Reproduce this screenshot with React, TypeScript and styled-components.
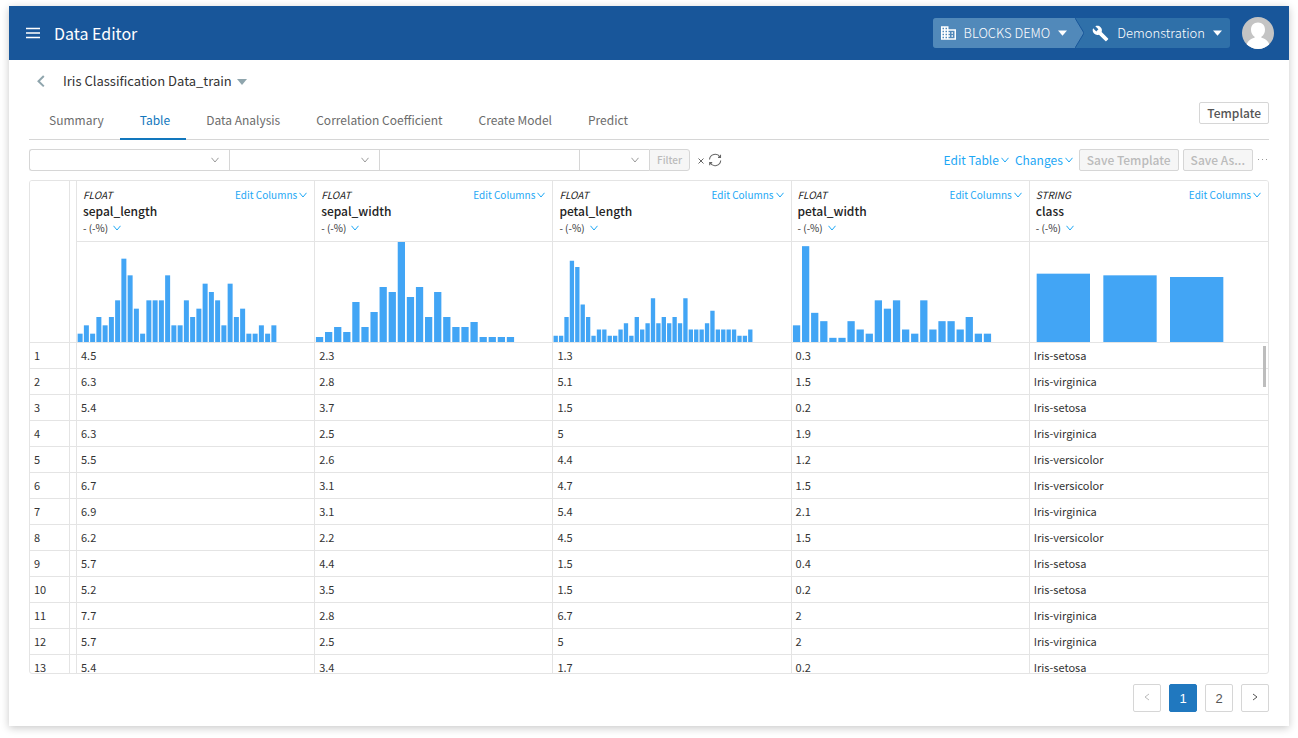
import React from "react";
import styled, { createGlobalStyle } from "styled-components";

const FONT = `"Noto Sans CJK JP", "Noto Sans", sans-serif`;
const LINK = "#1da7f5";
const LINE = "#e4e4e4";
const BORDER = "#d6d6d6";

const GlobalStyle = createGlobalStyle`
  * { box-sizing: border-box; }
  body { margin: 0; background: #fff; color: #333; font-family: ${FONT}; font-size: 13px; line-height: 20px; }
  button, input, select { font-family: inherit; margin: 0; }
  button { cursor: pointer; }
`;

const Window = styled.div`
  height: calc(100vh - 18px);
  margin: 6px 9px 12px;
  display: flex;
  flex-direction: column;
  background: #fff;
  box-shadow: 0 2px 8px rgba(0, 0, 0, 0.22);
`;

const TopBar = styled.header`
  flex: none;
  height: 54px;
  padding: 0 15px 0 17px;
  display: flex;
  align-items: center;
  background: #18569a;
  color: #fff;
`;

const IconButton = styled.button`
  display: flex;
  padding: 0;
  border: 0;
  background: none;
  color: inherit;
`;

const AppTitle = styled.h1`
  margin: 0 auto 0 14px;
  font-size: 16px;
  line-height: 24px;
  font-weight: 400;
`;

const Crumbs = styled.nav`
  position: relative;
  display: flex;
  height: 30px;
  margin-right: 12px;
  border-radius: 3px;
  overflow: hidden;
  background: #2f70a9;
`;

const Crumb = styled.button<{ $first?: boolean }>`
  display: flex;
  align-items: center;
  gap: 8px;
  padding: 0 8px;
  border: 0;
  background: ${(p) => (p.$first ? "#5189ba" : "none")};
  color: #fff;
  font-size: 13px;
  line-height: 20px;
  font-weight: 300;
`;

const CrumbArrow = styled.svg`
  flex: none;
  display: block;
`;

const Content = styled.main`
  flex: 1;
  min-height: 0;
  display: flex;
  flex-direction: column;
  padding: 0 20px 14px;
`;

const TitleRow = styled.div`
  display: flex;
  align-items: center;
  height: 42px;
  padding-left: 7px;
  color: #8fa5ad;
`;

const DataTitle = styled.h2`
  margin: 0 5px 0 17px;
  font-size: 13px;
  line-height: 20px;
  font-weight: 400;
  color: #333;
`;

const TabRow = styled.div`
  display: flex;
  align-items: flex-start;
  justify-content: space-between;
  height: 38px;
  border-bottom: 1px solid ${BORDER};
`;

const Tabs = styled.nav`
  display: flex;
`;

const Tab = styled.a<{ $active?: boolean }>`
  height: 38px;
  padding: 8px 16px 0 20px;
  font-size: 12px;
  line-height: 20px;
  text-decoration: none;
  color: ${(p) => (p.$active ? "#1277bd" : "#6c6c6c")};
  border-bottom: 2px solid ${(p) => (p.$active ? "#1277bd" : "transparent")};
`;

const SmallButton = styled.button`
  height: 22px;
  padding: 0 7px;
  border: 1px solid ${BORDER};
  border-radius: 2px;
  background: #fff;
  color: #555;
  font-size: 12px;
  line-height: 20px;
  font-weight: 500;
  &:disabled {
    background: #f6f6f6;
    color: #bbb;
  }
`;

const ToolRow = styled.div`
  display: flex;
  align-items: center;
  justify-content: space-between;
  height: 22px;
  margin: 9px 0;
`;

const Filters = styled.form`
  display: flex;
  align-items: center;
  color: #666;
`;

const SelectBox = styled.label<{ $width: number }>`
  position: relative;
  width: ${(p) => p.$width}px;
  height: 22px;
  svg {
    position: absolute;
    right: 10px;
    top: 7px;
    color: #999;
    pointer-events: none;
  }
`;

const Select = styled.select<{ $first?: boolean }>`
  appearance: none;
  width: 100%;
  height: 22px;
  border: 1px solid ${BORDER};
  border-right: 0;
  border-radius: ${(p) => (p.$first ? "3px 0 0 3px" : 0)};
  background: #fff;
`;

const ValueInput = styled.input`
  width: 200px;
  height: 22px;
  border: 1px solid ${BORDER};
  border-right: 0;
`;

const FilterButton = styled(SmallButton)`
  margin-right: 8px;
  border-radius: 0 3px 3px 0;
  font-size: 10px;
`;

const Actions = styled.div`
  display: flex;
  align-items: center;
  gap: 4px;
`;

const LinkButton = styled.button<{ $small?: boolean }>`
  display: flex;
  align-items: center;
  gap: 2px;
  padding: 0;
  border: 0;
  background: none;
  color: ${LINK};
  font-size: ${(p) => (p.$small ? 10 : 12)}px;
  line-height: 16px;
`;

const ActionLinks = styled.div`
  display: flex;
  gap: 6px;
  margin-right: 2px;
`;

const TableFrame = styled.div`
  position: relative;
  flex: 1;
  min-height: 0;
  display: flex;
  border: 1px solid ${LINE};
  border-radius: 3px;
  overflow: hidden;
`;

const TableScroll = styled.div`
  flex: 1;
  overflow-y: auto;
  scrollbar-width: none;
`;

const ScrollThumb = styled.div`
  position: absolute;
  top: 165px;
  right: 2px;
  width: 3px;
  height: 41px;
  background: #bdbdbd;
`;

const Table = styled.table`
  width: 100%;
  table-layout: fixed;
  border-collapse: separate;
  border-spacing: 0;
  thead {
    position: sticky;
    top: 0;
    background: #fff;
  }
  th, td {
    padding: 0;
    text-align: left;
    font-weight: 400;
    border-right: 1px solid ${LINE};
    border-bottom: 1px solid ${LINE};
  }
  tr > :last-child:not([rowspan]) {
    border-right: 0;
  }
`;

const NumberCol = styled.col`
  width: 40px;
`;

const GapCol = styled.col`
  width: 7px;
`;

const HeadInfo = styled.div`
  height: 60px;
  padding: 6px 7px 0 6px;
  line-height: 16px;
`;

const HeadTop = styled.div`
  display: flex;
  justify-content: space-between;
`;

const TypeName = styled.em`
  font-size: 10px;
  color: #222;
`;

const ColumnName = styled.strong`
  display: block;
  font-size: 12px;
  font-weight: 500;
  color: #222;
`;

const Missing = styled.button`
  display: flex;
  align-items: center;
  gap: 5px;
  padding: 0;
  border: 0;
  background: none;
  font-size: 10px;
  line-height: 18px;
  color: #333;
  svg {
    color: ${LINK};
  }
`;

const Chart = styled.svg`
  display: block;
  fill: #42a5f5;
`;

const Cell = styled.div`
  height: 25px;
  padding-left: 4px;
  font-size: 11px;
  line-height: 25px;
  color: #333;
`;

const Pager = styled.nav`
  display: flex;
  justify-content: flex-end;
  gap: 8px;
  margin-top: 10px;
`;

const PageButton = styled.button<{ $current?: boolean }>`
  display: flex;
  align-items: center;
  justify-content: center;
  width: 28px;
  height: 28px;
  padding: 0;
  border: 1px solid ${(p) => (p.$current ? "#2078bf" : BORDER)};
  border-radius: 2px;
  background: ${(p) => (p.$current ? "#2078bf" : "#fff")};
  color: ${(p) => (p.$current ? "#fff" : "#555")};
  font-family: "Liberation Sans", sans-serif;
  font-size: 13px;
  &:disabled {
    color: #bbb;
  }
`;

const Chevron = ({ size = 8 }: { size?: number }) => (
  <svg width={size} height={size} viewBox="0 0 8 8" fill="none" stroke="currentColor" strokeWidth="1">
    <path d="M0.5 1.8 L4 6 L7.5 1.8" />
  </svg>
);

const Caret = ({ width = 10 }: { width?: number }) => (
  <svg width={width} height="6" viewBox="0 0 10 6" preserveAspectRatio="none" fill="currentColor">
    <path d="M0 0.5h10L5 5.8z" />
  </svg>
);

const SideChevron = ({ right }: { right?: boolean }) => (
  <svg width="8" height="10" viewBox="0 0 8 10" fill="none" stroke="currentColor">
    <path d={right ? "M2 1L6 4L2 7" : "M6 1L2 4L6 7"} />
  </svg>
);

interface Column {
  type: string;
  name: string;
  max: number;
  counts: number[];
}

const columns: Column[] = [
  {
    type: "FLOAT",
    name: "sepal_length",
    max: 12,
    counts: [1, 2, 1, 3, 2, 3, 5, 10, 8, 4, 1, 5, 5, 5, 8, 2, 2, 5, 3, 4, 7, 6, 5, 2, 7, 3, 4, 1, 1, 2, 1, 2],
  },
  {
    type: "FLOAT",
    name: "sepal_width",
    max: 20,
    counts: [1, 2, 3, 2, 8, 3, 6, 11, 10, 20, 9, 11, 5, 10, 5, 3, 3, 4, 1, 1, 1, 1],
  },
  {
    type: "FLOAT",
    name: "petal_length",
    max: 16,
    counts: [
      1, 1, 4, 13, 12, 6, 4, 1, 2, 2, 1, 1, 2, 3, 1, 4, 2, 3, 7, 3, 4, 3, 4, 3, 7, 2, 2, 2, 3, 5, 2, 2, 2, 2, 1, 1, 2,
    ],
  },
  {
    type: "FLOAT",
    name: "petal_width",
    max: 24,
    counts: [4, 23, 7, 5, 1, 1, 5, 3, 2, 10, 8, 10, 3, 2, 10, 3, 5, 5, 3, 6, 2, 2],
  },
  { type: "STRING", name: "class", max: 60, counts: [41, 40, 39] },
];

const rows = [
  ["4.5", "2.3", "1.3", "0.3", "Iris-setosa"],
  ["6.3", "2.8", "5.1", "1.5", "Iris-virginica"],
  ["5.4", "3.7", "1.5", "0.2", "Iris-setosa"],
  ["6.3", "2.5", "5", "1.9", "Iris-virginica"],
  ["5.5", "2.6", "4.4", "1.2", "Iris-versicolor"],
  ["6.7", "3.1", "4.7", "1.5", "Iris-versicolor"],
  ["6.9", "3.1", "5.4", "2.1", "Iris-virginica"],
  ["6.2", "2.2", "4.5", "1.5", "Iris-versicolor"],
  ["5.7", "4.4", "1.5", "0.4", "Iris-setosa"],
  ["5.2", "3.5", "1.5", "0.2", "Iris-setosa"],
  ["7.7", "2.8", "6.7", "2", "Iris-virginica"],
  ["5.7", "2.5", "5", "2", "Iris-virginica"],
  ["5.4", "3.4", "1.7", "0.2", "Iris-setosa"],
];

const tabs = ["Summary", "Table", "Data Analysis", "Correlation Coefficient", "Create Model", "Predict"];

function Histogram({ counts, max }: { counts: number[]; max: number }) {
  const band = 200 / counts.length;
  return (
    <Chart width="200" height="100" viewBox="0 0 200 100">
      {counts.map((count, i) => {
        const height = (count / max) * 100;
        return <rect key={i} x={band * (i + 0.1)} y={100 - height} width={band * 0.8} height={height} />;
      })}
    </Chart>
  );
}

export default function App() {
  return (
    <>
      <GlobalStyle />
      <Window>
        <TopBar>
          <IconButton aria-label="Menu">
            <svg width="14" height="12" viewBox="0 0 14 12" fill="none" stroke="currentColor" strokeWidth="1.4">
              <path d="M0 1.5h14M0 6h14M0 10.5h14" />
            </svg>
          </IconButton>
          <AppTitle>Data Editor</AppTitle>
          <Crumbs aria-label="Workspace">
            <Crumb $first>
              <svg width="15" height="14" viewBox="2 3 20 18" fill="currentColor">
                <path d="M12 7V3H2v18h20V7H12zM6 19H4v-2h2v2zm0-4H4v-2h2v2zm0-4H4V9h2v2zm0-4H4V5h2v2zm4 12H8v-2h2v2zm0-4H8v-2h2v2zm0-4H8V9h2v2zm0-4H8V5h2v2zm10 12h-8v-2h2v-2h-2v-2h2v-2h-2V9h8v10zm-2-8h-2v2h2v-2zm0 4h-2v2h2v-2z" />
              </svg>
              BLOCKS DEMO
              <Caret width={9} />
            </Crumb>
            <CrumbArrow width="9" height="30" viewBox="0 0 9 30">
              <path d="M0 0L9 15L0 30z" fill="#5189ba" />
              <path d="M0 0L9 15L0 30" fill="none" stroke="#18569a" />
            </CrumbArrow>
            <Crumb>
              <svg width="17" height="17" viewBox="0 0 24 24" fill="currentColor">
                <path d="M22.7 19l-9.1-9.1c.9-2.3.4-5-1.5-6.9-2-2-5-2.4-7.4-1.3L9 6 6 9 1.6 4.7C.4 7.1.9 10.1 2.9 12.1c1.9 1.9 4.6 2.4 6.9 1.5l9.1 9.1c.4.4 1 .4 1.4 0l2.3-2.3c.5-.4.5-1.1.1-1.4z" />
              </svg>
              Demonstration
              <Caret width={9} />
            </Crumb>
          </Crumbs>
          <IconButton aria-label="Account">
            <svg width="32" height="32" viewBox="0 0 32 32">
              <clipPath id="avatar-clip">
                <circle cx="16" cy="16" r="16" />
              </clipPath>
              <g clipPath="url(#avatar-clip)">
                <rect width="32" height="32" fill="#c4c4c4" />
                <path
                  d="M16 5.5c4.4 0 7 3 7 7.2 0 3-1.3 5.6-3.6 7.1v1c5 .8 8.200 4.500 9.200 11.200H3.400c1-6.700 4.200-10.400 9.200-11.200v-1C10.300 18.300 9 15.700 9 12.700c0-4.200 2.600-7.200 7-7.200z"
                  fill="#fff"
                />
              </g>
            </svg>
          </IconButton>
        </TopBar>

        <Content>
          <TitleRow>
            <IconButton aria-label="Back">
              <svg width="10" height="14" viewBox="0 0 10 14" fill="none" stroke="currentColor" strokeWidth="2">
                <path d="M7.8 2L2.5 7.2L7.8 12.4" />
              </svg>
            </IconButton>
            <DataTitle>Iris Classification Data_train</DataTitle>
            <IconButton aria-label="Choose data">
              <svg width="10" height="8" viewBox="0 0 10 8" fill="currentColor">
                <path d="M0 2h10L5 8z" />
              </svg>
            </IconButton>
          </TitleRow>

          <TabRow>
            <Tabs>
              {tabs.map((tab) => (
                <Tab key={tab} href="#" $active={tab === "Table"}>
                  {tab}
                </Tab>
              ))}
            </Tabs>
            <SmallButton>Template</SmallButton>
          </TabRow>

          <ToolRow>
            <Filters>
              <SelectBox $width={200}>
                <Select $first aria-label="Column" />
                <Chevron />
              </SelectBox>
              <SelectBox $width={150}>
                <Select aria-label="Condition" />
                <Chevron />
              </SelectBox>
              <ValueInput aria-label="Value" />
              <SelectBox $width={70}>
                <Select aria-label="Operator" />
                <Chevron />
              </SelectBox>
              <FilterButton type="button" disabled>
                Filter
              </FilterButton>
              <IconButton type="button" aria-label="Clear filter">
                <svg width="6" height="8" viewBox="0 0 6 8" fill="none" stroke="currentColor">
                  <path d="M0.5 2.5l5 5M5.5 2.5l-5 5" />
                </svg>
              </IconButton>
              <IconButton type="button" aria-label="Reload">
                <svg width="22" height="14" viewBox="0 0 22 14" fill="none" stroke="currentColor" strokeWidth="1.1">
                  <path d="M5.5 6.5A5.7 5.7 0 0 1 16 4M16.5 1.8V4.4H14M16.7 7.5A5.7 5.7 0 0 1 6.2 10M5.7 12.2V9.6H8.2" />
                </svg>
              </IconButton>
            </Filters>
            <Actions>
              <ActionLinks>
                <LinkButton>
                  Edit Table
                  <Chevron />
                </LinkButton>
                <LinkButton>
                  Changes
                  <Chevron />
                </LinkButton>
              </ActionLinks>
              <SmallButton disabled>Save Template</SmallButton>
              <SmallButton disabled>Save As...</SmallButton>
              <IconButton aria-label="More">
                <svg width="12" height="4" viewBox="0 0 12 4" fill="#999">
                  <path d="M1 1h1v1h-1zM5 1h1v1h-1zM9 1h1v1h-1z" />
                </svg>
              </IconButton>
            </Actions>
          </ToolRow>

          <TableFrame>
            <TableScroll>
              <Table>
                <colgroup>
                  <NumberCol />
                  <GapCol />
                  {columns.map((c) => (
                    <col key={c.name} />
                  ))}
                </colgroup>
                <thead>
                  <tr>
                    <th rowSpan={2} />
                    <th rowSpan={2} />
                    {columns.map((c) => (
                      <th key={c.name} scope="col">
                        <HeadInfo>
                          <HeadTop>
                            <TypeName>{c.type}</TypeName>
                            <LinkButton $small>
                              Edit Columns
                              <Chevron />
                            </LinkButton>
                          </HeadTop>
                          <ColumnName>{c.name}</ColumnName>
                          <Missing>
                            - (-%)
                            <Chevron />
                          </Missing>
                        </HeadInfo>
                      </th>
                    ))}
                  </tr>
                  <tr>
                    {columns.map((c) => (
                      <td key={c.name}>
                        <Histogram counts={c.counts} max={c.max} />
                      </td>
                    ))}
                  </tr>
                </thead>
                <tbody>
                  {rows.map((row, i) => (
                    <tr key={i}>
                      <th scope="row">
                        <Cell>{i + 1}</Cell>
                      </th>
                      <td />
                      {row.map((value, j) => (
                        <td key={j}>
                          <Cell>{value}</Cell>
                        </td>
                      ))}
                    </tr>
                  ))}
                </tbody>
              </Table>
            </TableScroll>
            <ScrollThumb />
          </TableFrame>

          <Pager aria-label="Pages">
            <PageButton disabled aria-label="Previous page">
              <SideChevron />
            </PageButton>
            <PageButton $current>1</PageButton>
            <PageButton>2</PageButton>
            <PageButton aria-label="Next page">
              <SideChevron right />
            </PageButton>
          </Pager>
        </Content>
      </Window>
    </>
  );
}
